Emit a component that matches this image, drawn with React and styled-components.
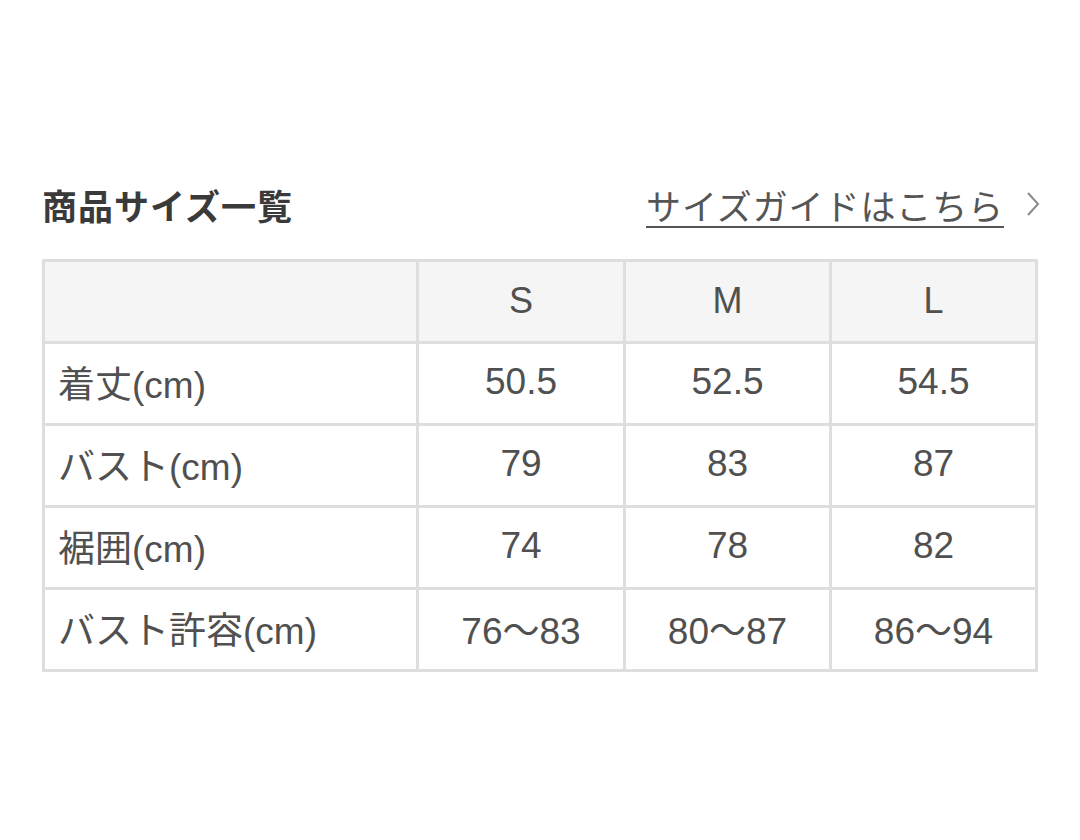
import React from "react";
import styled, { createGlobalStyle } from "styled-components";

const GlobalStyle = createGlobalStyle`
  html, body {
    margin: 0;
    padding: 0;
    background: #ffffff;
  }
  body {
    font-family: "Liberation Sans", "Noto Sans CJK JP", sans-serif;
    color: #444;
  }
`;

const Page = styled.div`
  width: 1080px;
  height: 840px;
  box-sizing: border-box;
  padding: 177px 0 0 42px;
`;

const Header = styled.div`
  display: flex;
  align-items: center;
  justify-content: space-between;
  width: 998px;
  height: 54px;
  margin-bottom: 28px;
`;

const Title = styled.h2`
  margin: 0;
  font-size: 35px;
  font-weight: 700;
  color: #3a3a3a;
  letter-spacing: 1px;
  font-family: "Noto Sans CJK JP", sans-serif;
`;

const GuideLink = styled.a`
  display: flex;
  align-items: center;
  gap: 22px;
  color: #555;
  text-decoration: none;
  cursor: pointer;
`;

const LinkText = styled.span`
  font-family: "Noto Sans CJK JP", sans-serif;
  font-size: 35px;
  font-weight: 400;
  text-decoration: underline;
  text-decoration-thickness: 2px;
  text-underline-offset: 6px;
  letter-spacing: 0.9px;
`;

const Table = styled.table`
  border-collapse: collapse;
  table-layout: fixed;
  width: 993px;
  border: 3px solid #dedede;
`;

const HeadCell = styled.th`
  height: 77px;
  padding: 0 0 2px;
  background: #f5f5f5;
  border: 3px solid #dedede;
  font-size: 36px;
  font-weight: 400;
  color: #505050;
  text-align: center;
`;

const Cell = styled.td`
  height: 75px;
  padding: 0 0 4px ${(p) => (p.$label ? "13px" : "0")};
  border: 3px solid #dedede;
  font-size: 37px;
  color: #505050;
  text-align: ${(p) => (p.$label ? "left" : "center")};
  white-space: nowrap;
`;

const Chevron = () => (
  <svg width="14" height="26" viewBox="0 0 14 26" fill="none">
    <path d="M2 2 L12 13 L2 24" stroke="#8a8a8a" strokeWidth="2" />
  </svg>
);

const sizes = ["S", "M", "L"];

const rows = [
  { label: "着丈(cm)", values: ["50.5", "52.5", "54.5"] },
  { label: "バスト(cm)", values: ["79", "83", "87"] },
  { label: "裾囲(cm)", values: ["74", "78", "82"] },
  { label: "バスト許容(cm)", values: ["76〜83", "80〜87", "86〜94"] },
];

export default function App() {
  return (
    <>
      <GlobalStyle />
      <Page>
        <Header>
          <Title>商品サイズ一覧</Title>
          <GuideLink>
            <LinkText>サイズガイドはこちら</LinkText>
            <Chevron />
          </GuideLink>
        </Header>
        <Table>
          <colgroup>
            <col style={{ width: 374 }} />
            <col style={{ width: 207 }} />
            <col style={{ width: 206 }} />
            <col style={{ width: 206 }} />
          </colgroup>
          <thead>
            <tr>
              <HeadCell />
              {sizes.map((s) => (
                <HeadCell key={s}>{s}</HeadCell>
              ))}
            </tr>
          </thead>
          <tbody>
            {rows.map((r) => (
              <tr key={r.label}>
                <Cell $label>{r.label}</Cell>
                {r.values.map((v, i) => (
                  <Cell key={i}>{v}</Cell>
                ))}
              </tr>
            ))}
          </tbody>
        </Table>
      </Page>
    </>
  );
}
